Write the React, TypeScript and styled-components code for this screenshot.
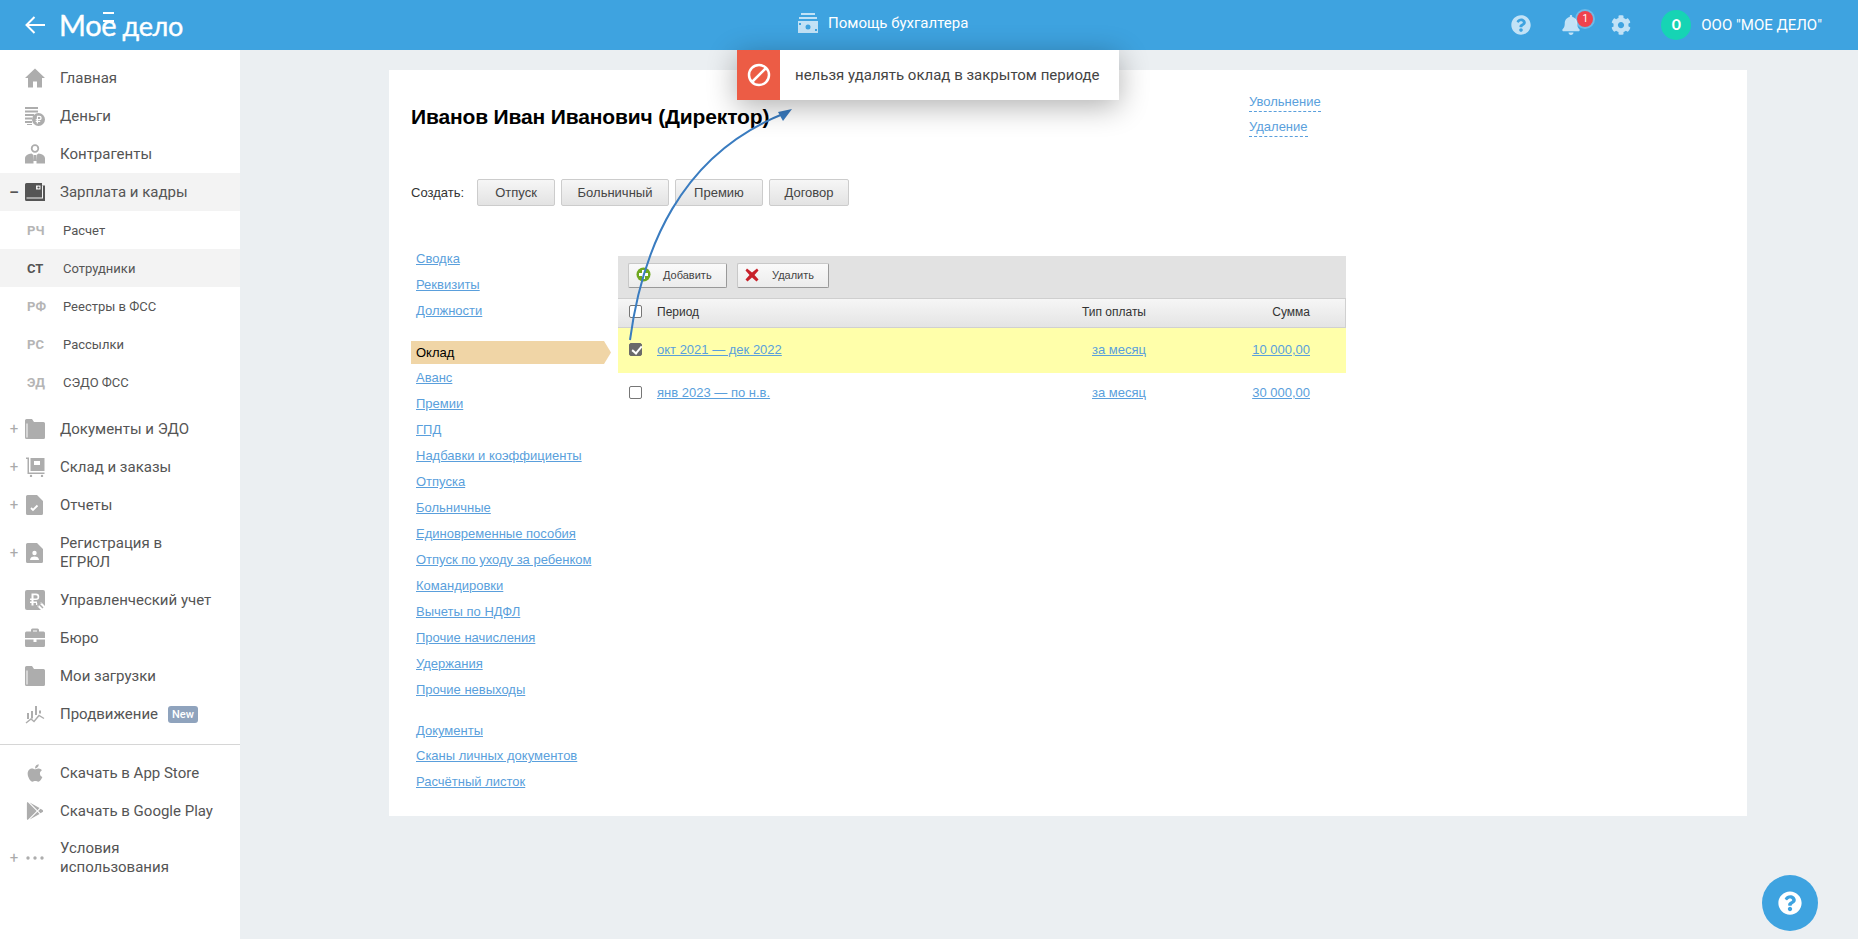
import React from "react";
import styled, { createGlobalStyle } from "styled-components";
import { FaApple, FaBell, FaCog, FaGooglePlay, FaQuestionCircle } from "react-icons/fa";

const Global = createGlobalStyle`
  html, body { margin: 0; padding: 0; background: #ebeff2; }
  body { font-family: "Liberation Sans", Arial, sans-serif; overflow: hidden; }
  * { box-sizing: border-box; }
`;

const Page = styled.div`
  position: relative;
  width: 1858px;
  height: 939px;
  display: flex;
  flex-direction: column;
  background: #ebeff2;
  overflow: hidden;
`;

const Header = styled.header`
  flex: 0 0 50px;
  display: flex;
  align-items: center;
  background: #3ea3e0;
  color: #fff;
  font-family: Roboto, sans-serif;
`;
const HeaderLeft = styled.div`
  flex: 0 0 798px;
  display: flex;
  align-items: center;
  padding-left: 25px;
`;
const Logo = styled.div`
  margin-left: 14px;
  font-family: Lato, sans-serif;
  font-size: 29px;
  line-height: 34px;
  letter-spacing: -0.3px;
  word-spacing: -1px;
  color: #fff;
  -webkit-text-stroke: 0.4px #fff;
  white-space: nowrap;
`;
const LogoE = styled.span`
  position: relative;
  &::before {
    content: "";
    position: absolute;
    left: 2px;
    right: 2px;
    top: 5px;
    height: 6px;
    border-top: 2px solid #fff;
    border-bottom: 2px solid #fff;
  }
`;
const LogoWord = styled.span`
  font-size: 27px;
`;
const HelpLink = styled.div`
  display: flex;
  align-items: center;
  gap: 10px;
  flex: 1;
  font-size: 15px;
  margin-top: -4px;
`;
const HeaderRight = styled.div`
  display: flex;
  align-items: center;
  color: #c2e2f6;
  padding-right: 36px;
`;
const HeaderIcon = styled.div`
  position: relative;
  width: 20px;
  height: 20px;
  margin-right: 30px;
  display: flex;
  align-items: center;
  justify-content: center;
  font-size: 20px;
`;
const Badge = styled.span`
  position: absolute;
  left: 16px;
  top: -4px;
  width: 16px;
  height: 16px;
  border-radius: 50%;
  background: #f0424e;
  color: #fff;
  font-size: 10px;
  line-height: 16px;
  text-align: center;
  box-shadow: 0 0 0 2px rgba(255, 255, 255, 0.25);
`;
const Avatar = styled.div`
  width: 30px;
  height: 30px;
  border-radius: 50%;
  background: #16d4b4;
  color: #fff;
  font-weight: 700;
  font-size: 14px;
  line-height: 30px;
  text-align: center;
`;
const Company = styled.div`
  margin-left: 10px;
  color: #fff;
  font-size: 15px;
  white-space: nowrap;
`;

const Body = styled.div`
  flex: 1;
  display: flex;
  min-height: 0;
`;
const Sidebar = styled.nav`
  flex: 0 0 240px;
  background: #fff;
  padding-top: 9px;
  font-family: Roboto, sans-serif;
  color: #555;
`;
const Group = styled.div<{ $gap?: number }>`
  margin-top: ${(p) => p.$gap ?? 0}px;
`;
const Divider = styled.div`
  height: 1px;
  margin: 11px 0 9px;
  background: #d6d6d6;
`;
const MenuRow = styled.div<{ $h: number; $active?: boolean }>`
  position: relative;
  height: ${(p) => p.$h}px;
  display: flex;
  align-items: center;
  padding-left: 25px;
  background: ${(p) => (p.$active ? "#f3f3f3" : "transparent")};
`;
const Toggle = styled.span`
  position: absolute;
  left: 9px;
  top: 50%;
  margin-top: -10px;
  width: 10px;
  height: 20px;
  font-size: 15px;
  line-height: 20px;
  text-align: center;
  color: #aaa;
`;
const ToggleMinus = styled(Toggle)`
  color: #555;
  font-weight: 700;
`;
const MenuIcon = styled.span<{ $active?: boolean }>`
  flex: 0 0 20px;
  width: 20px;
  height: 20px;
  display: flex;
  align-items: center;
  justify-content: center;
  color: ${(p) => (p.$active ? "#555" : "#adadad")};
  font-size: 20px;
`;
const MenuText = styled.span`
  margin-left: 15px;
  font-size: 15px;
  line-height: 19px;
  white-space: pre;
`;
const NewTag = styled.span`
  margin-left: 10px;
  width: 30px;
  height: 17px;
  border-radius: 3px;
  background: #8fa3bd;
  color: #fff;
  font-size: 11px;
  font-weight: 500;
  line-height: 17px;
  text-align: center;
`;
const SubRow = styled.div<{ $active?: boolean }>`
  height: 38px;
  display: flex;
  align-items: center;
  padding: 1px 0 0 27px;
  background: ${(p) => (p.$active ? "#f3f3f3" : "transparent")};
`;
const SubAbbr = styled.span<{ $active?: boolean }>`
  flex: 0 0 36px;
  font-size: 13px;
  font-weight: 700;
  color: ${(p) => (p.$active ? "#555" : "#b5b5b5")};
`;
const SubText = styled.span`
  font-size: 13px;
`;

const Main = styled.main`
  flex: 1;
  padding: 20px 0 0 149px;
`;
const Card = styled.section`
  width: 1358px;
  height: 746px;
  background: #fff;
  padding: 22px 0 0 22px;
`;
const TitleRow = styled.div`
  width: 910px;
  height: 45px;
  display: flex;
  justify-content: space-between;
`;
const Title = styled.h1`
  margin: 13px 0 0;
  font-size: 21px;
  line-height: 24px;
  font-weight: 700;
  letter-spacing: -0.15px;
  color: #000;
`;
const SideLinks = styled.div`
  width: 72px;
  display: flex;
  flex-direction: column;
  align-items: flex-start;
  gap: 5px;
`;
const DashedLink = styled.a`
  font-size: 13px;
  line-height: 19px;
  height: 20px;
  color: #5a9fdc;
  border-bottom: 1px dashed #5a9fdc;
`;
const CreateRow = styled.div`
  margin-top: 42px;
  display: flex;
  align-items: center;
  height: 27px;
  font-size: 13px;
  color: #333;
`;
const CreateLabel = styled.span`
  width: 66px;
`;
const CreateButton = styled.button<{ $w: number }>`
  width: ${(p) => p.$w}px;
  height: 27px;
  margin-right: 6px;
  padding: 0;
  border: 1px solid #ccc;
  border-radius: 2px;
  background: linear-gradient(#f6f6f6, #e3e3e3);
  color: #444;
  font-family: inherit;
  font-size: 13px;
`;
const Columns = styled.div`
  margin-top: 40px;
  display: flex;
`;
const SideNav = styled.div`
  flex: 0 0 207px;
`;
const NavLink = styled.a<{ $gap?: number }>`
  display: block;
  height: 26px;
  margin-top: ${(p) => p.$gap ?? 0}px;
  padding-left: 5px;
  font-size: 13px;
  line-height: 26px;
  color: #5a9fdc;
  text-decoration: underline;
`;
const NavCurrent = styled.div`
  width: 200px;
  height: 23px;
  margin-top: 17px;
  margin-bottom: 1px;
  padding-left: 5px;
  font-size: 13px;
  line-height: 23px;
  color: #000;
  background: #f0d5a6;
  clip-path: polygon(0 0, 193px 0, 100% 50%, 193px 100%, 0 100%);
`;
const TableWrap = styled.div`
  width: 728px;
  margin-top: 10px;
`;
const Toolbar = styled.div`
  height: 42px;
  padding: 7px 0 0 10px;
  display: flex;
  gap: 10px;
  background: #e2e2e2;
`;
const ToolButton = styled.button<{ $w: number }>`
  width: ${(p) => p.$w}px;
  height: 25px;
  padding: 0 0 2px 7px;
  display: flex;
  align-items: center;
  border: 1px solid #c8c8c8;
  border-right-color: #999;
  border-bottom-color: #999;
  border-radius: 2px;
  background: linear-gradient(#fafafa, #ececec);
  color: #444;
  font-family: inherit;
  font-size: 11px;
`;
const ToolIcon = styled.span`
  flex: 0 0 27px;
  display: flex;
`;
const Row = styled.div`
  display: grid;
  grid-template-columns: 28px 1fr 120px 164px;
  align-items: center;
  padding: 0 36px 0 11px;
`;
const HeadRow = styled(Row)`
  height: 30px;
  padding: 0 35px 3px 11px;
  border: 1px solid #d0d0d0;
  border-left-width: 0;
  border-top-color: #cfcfcf;
  background: linear-gradient(#f6f6f6, #e4e4e4);
  font-size: 12px;
  color: #333;
`;
const BodyRow = styled(Row)<{ $selected?: boolean; $h: number }>`
  height: ${(p) => p.$h}px;
  padding-bottom: ${(p) => (p.$selected ? 3 : 0)}px;
  background: ${(p) => (p.$selected ? "#ffffaa" : "#fff")};
`;
const Right = styled.div`
  text-align: right;
`;
const CellLink = styled.a`
  font-size: 13px;
  color: #5a9fdc;
  text-decoration: underline;
`;
const Check = styled.input.attrs({ type: "checkbox", readOnly: true })`
  appearance: none;
  position: relative;
  display: block;
  width: 13px;
  height: 13px;
  margin: 0;
  border: 1px solid #767676;
  border-radius: 2px;
  background: #fff;
  &:checked {
    background: #6a6a6a;
    border-color: #6a6a6a;
  }
  &:checked::after {
    content: "";
    position: absolute;
    left: 3.5px;
    top: 0.5px;
    width: 4px;
    height: 8px;
    border: solid #fff;
    border-width: 0 2px 2px 0;
    transform: rotate(40deg);
  }
`;

const Toast = styled.div`
  position: absolute;
  left: 737px;
  top: 50px;
  width: 382px;
  height: 50px;
  display: flex;
  align-items: center;
  background: #fff;
  box-shadow: 0 6px 30px rgba(0, 0, 0, 0.32);
  font-family: Roboto, sans-serif;
  font-size: 15px;
  color: #444;
`;
const ToastIcon = styled.div`
  flex: 0 0 43px;
  height: 50px;
  display: flex;
  align-items: center;
  justify-content: center;
  background: #ec5c45;
  margin-right: 15px;
`;
const ArrowLayer = styled.svg`
  position: absolute;
  left: 0;
  top: 0;
  pointer-events: none;
`;
const HelpFab = styled.div`
  position: absolute;
  left: 1762px;
  top: 875px;
  width: 56px;
  height: 56px;
  border-radius: 50%;
  background: #3ea3e0;
  display: flex;
  align-items: center;
  justify-content: center;
  color: #fff;
  font-size: 24px;
`;

const I = ({ children }: { children: React.ReactNode }) => (
  <svg width="20" height="20" viewBox="0 0 20 20" fill="currentColor">{children}</svg>
);

const icons: Record<string, React.ReactNode> = {
  home: <I><path d="M10 .5 20 10h-3v9.500h-5v-6H8v6H3V10H0z" /></I>,
  money: <I><path d="M0 1h13v2H0zM0 4.500h13v2H0zM0 8h9v2H0zM0 11.500h7v2H0zM0 15h7v2H0zM2 18h5v1H2z" /><circle cx="13.500" cy="13.500" r="6.500" /><path d="M12 9.800h2.500a2 2 0 0 1 0 4.400H13V15h2.200v1H13v1.500h-1.300V16h-1v-1h1v-.8h-1v-1h1zM13 11v2h1.400a1 1 0 0 0 0-2z" fill="#fff" /></I>,
  person: <I><circle cx="10" cy="4.500" r="3.300" fill="none" stroke="currentColor" strokeWidth="1.800" /><path d="M0 19.500v-5c0-3 3-4.500 6.500-5L8.500 11v8.500zM20 19.500v-5c0-3-3-4.500-6.500-5L11.500 11v8.500zM9 11h2l.5 6h-3z" /></I>,
  wallet: <I><path d="M0 2.500A1.500 1.500 0 0 1 1.500 1H17v2.500h3V19H1.500A1.500 1.500 0 0 1 0 17.500z" /><path d="M11 3.500h4.500v4H11zM1.500 15.500H17v1H1.500zM17 3.500h1v13h-1z" fill="#f3f3f3" /><circle cx="13.500" cy="5.500" r="1.100" fill="#555" /></I>,
  folder: <I><path d="M0 1.500A1.500 1.500 0 0 1 1.500 0H7l2 3h9.500A1.500 1.500 0 0 1 20 4.500V18.500a1.500 1.500 0 0 1-1.500 1.500h-17A1.500 1.500 0 0 1 0 18.500z" /><path d="M1.500 4.500h1v14h-1z" fill="#fff" /></I>,
  store: <I><path d="M1 .5h3v15h15.500v1.500H2.500V2H1z" /><path d="M5.500 1h14v13h-14z" /><path d="M9 4h6v4H9z" fill="#fff" /><circle cx="6" cy="19" r="1.200" /><circle cx="17" cy="19" r="1.200" /></I>,
  report: <I><path d="M2.500 0H12l6 6v12.500a1.500 1.500 0 0 1-1.500 1.500h-14A1.500 1.500 0 0 1 1 18.500v-17A1.500 1.500 0 0 1 2.500 0z" /><path d="m6 13 2 2 4.500-4.500" fill="none" stroke="#fff" strokeWidth="1.800" /></I>,
  reg: <I><path d="M2.500 0H12l6 6v12.500a1.500 1.500 0 0 1-1.500 1.500h-14A1.500 1.500 0 0 1 1 18.500v-17A1.500 1.500 0 0 1 2.500 0z" /><circle cx="9.500" cy="10" r="2.200" fill="#fff" /><path d="M5 17c0-2.500 2-3.500 4.500-3.500S14 14.500 14 17z" fill="#fff" /></I>,
  ruble: <I><rect width="20" height="20" rx="2" /><path d="M6.500 3.500h4.500a3.200 3.200 0 0 1 0 6.500H8.500v1.500H12V13H8.500v2.500h-2V13H5v-1.500h1.500V10H5V8.500h1.500zM8.500 5.300v3.200H11a1.600 1.600 0 0 0 0-3.200z" fill="#fff" /><path d="M11 13h4v-1h1l4 4v4h-4l-4-4v-1h-1z" fill="#fff" /><path d="m13 13 5 5m-5-5h3.500M13 13v3.500" stroke="currentColor" strokeWidth="1.500" fill="none" /></I>,
  case: <I><path d="M6 3.500V2a1.500 1.500 0 0 1 1.500-1.500h5A1.500 1.500 0 0 1 14 2v1.500h4.500A1.500 1.500 0 0 1 20 5v5H0V5a1.500 1.500 0 0 1 1.500-1.500zM8 2.500v1h4v-1zM0 11.500h8.500V14h3v-2.500H20v6a1.500 1.500 0 0 1-1.500 1.500h-17A1.500 1.500 0 0 1 0 17.500z" /></I>,
  chart: <I><path d="M6 7h2v7.500H6zM10 2h2v9h-2zM14 6.500h2v3h-2zM2 9h2v6H2z" /><path d="m1 19 5-4 3 2.500 5-6 5 3" fill="none" stroke="currentColor" strokeWidth="1.400" /></I>,
  dots: <I><circle cx="3" cy="10" r="1.700" /><circle cx="10" cy="10" r="1.700" /><circle cx="17" cy="10" r="1.700" /></I>,
};

type Item = { label: string; icon: React.ReactNode; toggle?: boolean; h?: number; tag?: boolean };

const items2: Item[] = [
  { label: "Документы и ЭДО", icon: icons.folder, toggle: true },
  { label: "Склад и заказы", icon: icons.store, toggle: true },
  { label: "Отчеты", icon: icons.report, toggle: true },
  { label: "Регистрация в\nЕГРЮЛ", icon: icons.reg, toggle: true, h: 57 },
  { label: "Управленческий учет", icon: icons.ruble },
  { label: "Бюро", icon: icons.case },
  { label: "Мои загрузки", icon: icons.folder },
  { label: "Продвижение", icon: icons.chart, tag: true },
];
const items3: Item[] = [
  { label: "Скачать в App Store", icon: <FaApple /> },
  { label: "Скачать в Google Play", icon: <FaGooglePlay size={18} /> },
  { label: "Условия\nиспользования", icon: icons.dots, toggle: true, h: 56 },
];
const subs = [
  ["РЧ", "Расчет"],
  ["СТ", "Сотрудники"],
  ["РФ", "Реестры в ФСС"],
  ["РС", "Рассылки"],
  ["ЭД", "СЭДО ФСС"],
];

const renderItem = (it: Item) => (
  <MenuRow key={it.label} $h={it.h ?? 38}>
    {it.toggle && <Toggle>+</Toggle>}
    <MenuIcon>{it.icon}</MenuIcon>
    <MenuText>{it.label}</MenuText>
    {it.tag && <NewTag>New</NewTag>}
  </MenuRow>
);

const navA = ["Сводка", "Реквизиты", "Должности"];
const navB = ["Аванс", "Премии", "ГПД", "Надбавки и коэффициенты", "Отпуска", "Больничные", "Единовременные пособия", "Отпуск по уходу за ребенком", "Командировки", "Вычеты по НДФЛ", "Прочие начисления", "Удержания", "Прочие невыходы"];

export default function App() {
  return (
    <Page>
      <Global />
      <Header>
        <HeaderLeft>
          <svg width="20" height="18" viewBox="0 0 20 18" fill="none" stroke="#fff" strokeWidth="2">
            <path d="M20 9H2M9.500 1 1.500 9l8 8" />
          </svg>
          <Logo>Мо<LogoE>е</LogoE> <LogoWord>дело</LogoWord></Logo>
        </HeaderLeft>
        <HelpLink>
          <svg width="20" height="20" viewBox="0 0 20 20" fill="#c2e2f6">
            <path d="M3 0h14v2H3zM1 4h18v2H1zM0 8h20v12H0z" />
            <circle cx="10" cy="14" r="2.500" fill="#3ea3e0" />
            <path d="M1 10h2v2H1zM17 16h2v2h-2z" fill="#3ea3e0" />
          </svg>
          Помощь бухгалтера
        </HelpLink>
        <HeaderRight>
          <HeaderIcon><FaQuestionCircle /></HeaderIcon>
          <HeaderIcon><FaBell /><Badge>1</Badge></HeaderIcon>
          <HeaderIcon><FaCog /></HeaderIcon>
          <Avatar>О</Avatar>
          <Company>ООО "МОЕ ДЕЛО"</Company>
        </HeaderRight>
      </Header>
      <Body>
        <Sidebar>
          <Group>
            <MenuRow $h={38}><MenuIcon>{icons.home}</MenuIcon><MenuText>Главная</MenuText></MenuRow>
            <MenuRow $h={38}><MenuIcon>{icons.money}</MenuIcon><MenuText>Деньги</MenuText></MenuRow>
            <MenuRow $h={38}><MenuIcon>{icons.person}</MenuIcon><MenuText>Контрагенты</MenuText></MenuRow>
            <MenuRow $h={38} $active>
              <ToggleMinus>–</ToggleMinus>
              <MenuIcon $active>{icons.wallet}</MenuIcon>
              <MenuText>Зарплата и кадры</MenuText>
            </MenuRow>
            {subs.map(([a, t], i) => (
              <SubRow key={a} $active={i === 1}>
                <SubAbbr $active={i === 1}>{a}</SubAbbr>
                <SubText>{t}</SubText>
              </SubRow>
            ))}
          </Group>
          <Group $gap={9}>{items2.map(renderItem)}</Group>
          <Divider />
          <Group>{items3.map(renderItem)}</Group>
        </Sidebar>
        <Main>
          <Card>
            <TitleRow>
              <Title>Иванов Иван Иванович (Директор)</Title>
              <SideLinks>
                <DashedLink>Увольнение</DashedLink>
                <DashedLink>Удаление</DashedLink>
              </SideLinks>
            </TitleRow>
            <CreateRow>
              <CreateLabel>Создать:</CreateLabel>
              <CreateButton $w={78}>Отпуск</CreateButton>
              <CreateButton $w={108}>Больничный</CreateButton>
              <CreateButton $w={88}>Премию</CreateButton>
              <CreateButton $w={80}>Договор</CreateButton>
            </CreateRow>
            <Columns>
              <SideNav>
                {navA.map((n) => <NavLink key={n}>{n}</NavLink>)}
                <NavCurrent>Оклад</NavCurrent>
                {navB.map((n) => <NavLink key={n}>{n}</NavLink>)}
                <NavLink $gap={15}>Документы</NavLink>
                <NavLink $gap={-1}>Сканы личных документов</NavLink>
                <NavLink>Расчётный листок</NavLink>
              </SideNav>
              <TableWrap>
                <Toolbar>
                  <ToolButton $w={99}>
                    <ToolIcon>
                      <svg width="15" height="15" viewBox="0 0 15 15">
                        <circle cx="7.500" cy="7.500" r="7" fill="#6fa820" />
                        <path d="M6 3h3v3h3v3H9v3H6V9H3V6h3z" fill="#fff" />
                      </svg>
                    </ToolIcon>
                    Добавить
                  </ToolButton>
                  <ToolButton $w={92}>
                    <ToolIcon>
                      <svg width="14" height="14" viewBox="0 0 14 14">
                        <path d="M2 0.500 7 4.500 12 0.500 13.500 2.500 9.500 7 13.500 11.500 11.500 13.500 7 9.500 2.500 13.500 0.500 11.500 4.500 7 0.500 2.500z" fill="#c8202a" />
                      </svg>
                    </ToolIcon>
                    Удалить
                  </ToolButton>
                </Toolbar>
                <HeadRow>
                  <Check />
                  <div>Период</div>
                  <Right>Тип оплаты</Right>
                  <Right>Сумма</Right>
                </HeadRow>
                <BodyRow $selected $h={45}>
                  <Check defaultChecked />
                  <div><CellLink>окт 2021 — дек 2022</CellLink></div>
                  <Right><CellLink>за месяц</CellLink></Right>
                  <Right><CellLink>10 000,00</CellLink></Right>
                </BodyRow>
                <BodyRow $h={38}>
                  <Check />
                  <div><CellLink>янв 2023 — по н.в.</CellLink></div>
                  <Right><CellLink>за месяц</CellLink></Right>
                  <Right><CellLink>30 000,00</CellLink></Right>
                </BodyRow>
              </TableWrap>
            </Columns>
          </Card>
        </Main>
      </Body>
      <ArrowLayer width="1858" height="939" viewBox="0 0 1858 939" fill="none">
        <path d="M630 340C642 250 680 155 783 114" stroke="#3a7cc0" strokeWidth="2" />
        <path d="M792 109 778 112 783 121z" fill="#3a7cc0" />
      </ArrowLayer>
      <Toast>
        <ToastIcon>
          <svg width="24" height="24" viewBox="0 0 24 24" fill="none" stroke="#fff" strokeWidth="2.500">
            <circle cx="12" cy="12" r="10" />
            <path d="M5 19 19 5" />
          </svg>
        </ToastIcon>
        нельзя удалять оклад в закрытом периоде
      </Toast>
      <HelpFab><FaQuestionCircle /></HelpFab>
    </Page>
  );
}
